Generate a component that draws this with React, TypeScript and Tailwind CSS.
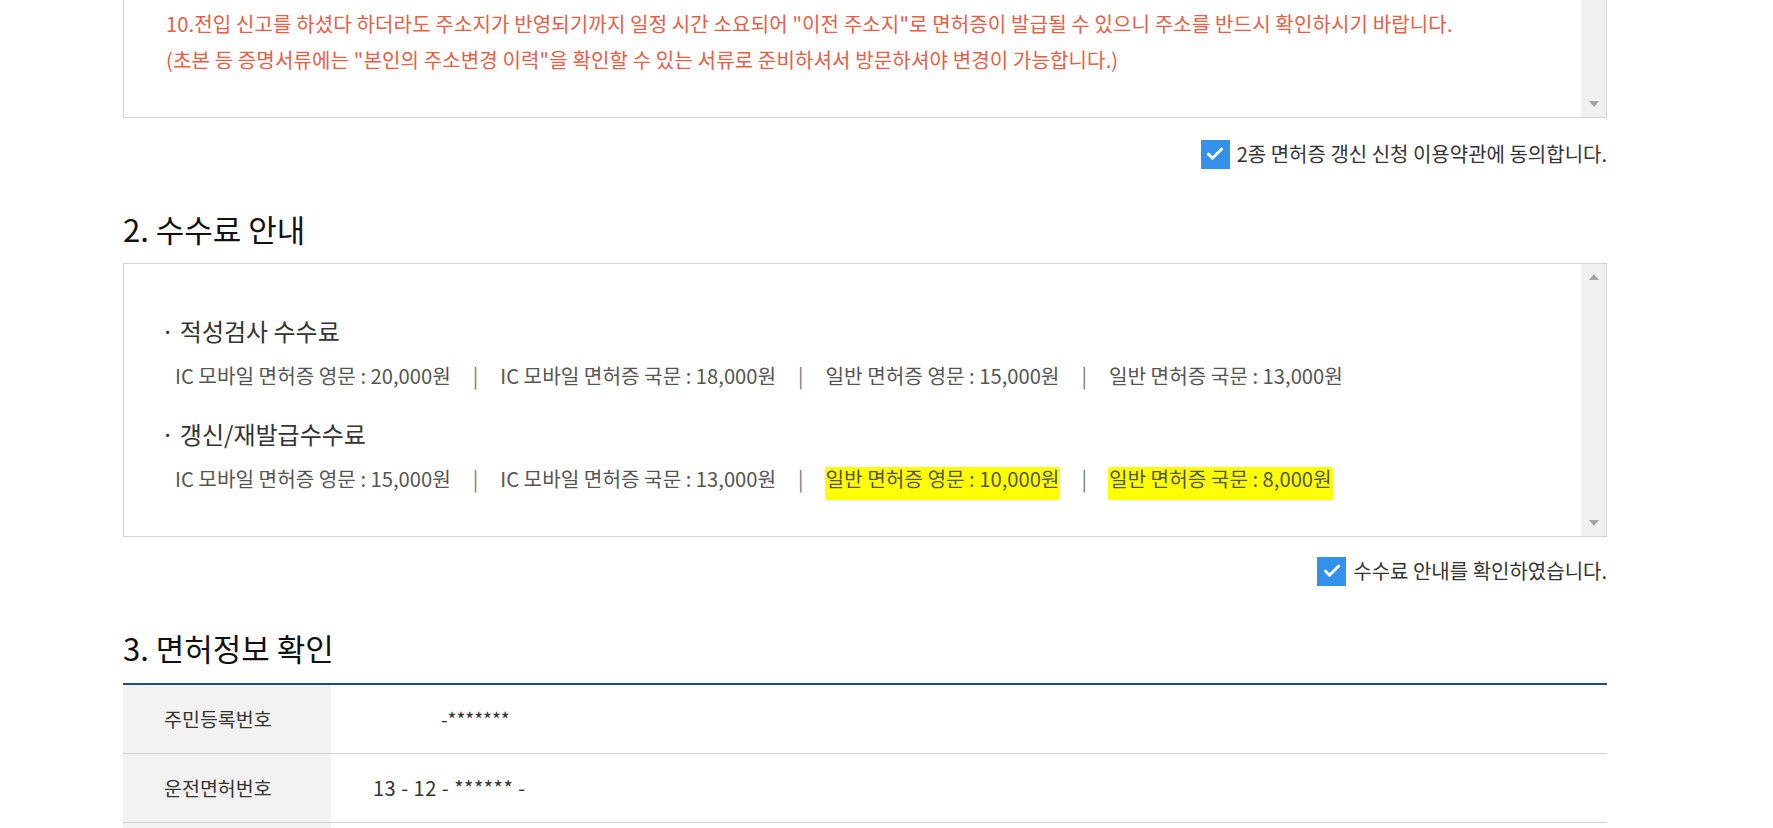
import { Check } from "lucide-react";

const font = { fontFamily: '"Noto Sans CJK KR", "Noto Sans", sans-serif' };

function Scrollbar({ top = true }: { top?: boolean }) {
  return (
    <div className="flex w-[25px] shrink-0 flex-col justify-between bg-[#f0f0f0] py-[10px]">
      <div className="flex justify-center">
        {top && (
          <div className="h-0 w-0 border-x-[5px] border-b-[6px] border-x-transparent border-b-[#a3a3a3]" />
        )}
      </div>
      <div className="flex justify-center">
        <div className="h-0 w-0 border-x-[5px] border-t-[6px] border-x-transparent border-t-[#a3a3a3]" />
      </div>
    </div>
  );
}

function Agree({ label }: { label: string }) {
  return (
    <div className="flex h-[28px] items-center justify-end gap-[7px]">
      <span className="flex h-[29px] w-[29px] items-center justify-center bg-[#3391ea]">
        <Check className="h-[20px] w-[20px] text-white" strokeWidth={3.5} />
      </span>
      <span className="text-[20px] text-[#333]">{label}</span>
    </div>
  );
}

function FeeRow({ items, marked = [] }: { items: string[]; marked?: number[] }) {
  return (
    <div className="mt-[5px] flex items-center gap-[22px] pl-[11px] text-[20.2px] leading-[40px] text-[#555]">
      {items.map((it, i) => (
        <div key={it} className="flex items-center gap-[22px]">
          {i > 0 && <span className="text-[#777]">|</span>}
          {marked.includes(i) ? (
            <span className="relative">
              <span className="absolute -left-[1px] -right-[1px] top-[8px] -bottom-[1px] rounded-[2px] bg-[#ffff00]" />
              <span className="relative">{it}</span>
            </span>
          ) : (
            <span>{it}</span>
          )}
        </div>
      ))}
    </div>
  );
}

export default function App() {
  return (
    <div className="min-h-[828px] bg-white" style={font}>
      <div className="ml-[123px] w-[1484px] pb-10">
        {/* 1. 이용약관 (tail) */}
        <div className="flex h-[118px] border-x border-b border-[#d4d4d4]">
          <div className="flex-1 pl-[42px] pt-[6px] text-[20px] leading-[36px] tracking-[0.15px] text-[#e95c45]">
            <p>
              10.전입 신고를 하셨다 하더라도 주소지가 반영되기까지 일정 시간 소요되어 "이전 주소지"로 면허증이 발급될 수
              있으니 주소를 반드시 확인하시기 바랍니다.
            </p>
            <p>(초본 등 증명서류에는 "본인의 주소변경 이력"을 확인할 수 있는 서류로 준비하셔서 방문하셔야 변경이 가능합니다.)</p>
          </div>
          <Scrollbar top={false} />
        </div>

        <div className="mt-[22px]">
          <Agree label="2종 면허증 갱신 신청 이용약관에 동의합니다." />
        </div>

        {/* 2. 수수료 안내 */}
        <h2 className="mt-[41px] text-[31px] leading-[40px] text-[#111]">2. 수수료 안내</h2>
        <div className="mt-[14px] flex h-[274px] border border-[#d4d4d4]">
          <div className="flex-1 pl-[40px] pt-[47px]">
            <p className="-ml-[3px] text-[24px] leading-[40px] text-[#333]">· 적성검사 수수료</p>
            <FeeRow
              items={[
                "IC 모바일 면허증 영문 : 20,000원",
                "IC 모바일 면허증 국문 : 18,000원",
                "일반 면허증 영문 : 15,000원",
                "일반 면허증 국문 : 13,000원",
              ]}
            />
            <p className="-ml-[3px] mt-[18px] text-[24px] leading-[40px] text-[#333]">· 갱신/재발급수수료</p>
            <FeeRow
              items={[
                "IC 모바일 면허증 영문 : 15,000원",
                "IC 모바일 면허증 국문 : 13,000원",
                "일반 면허증 영문 : 10,000원",
                "일반 면허증 국문 : 8,000원",
              ]}
              marked={[2, 3]}
            />
          </div>
          <Scrollbar />
        </div>

        <div className="mt-[20px]">
          <Agree label="수수료 안내를 확인하였습니다." />
        </div>

        {/* 3. 면허정보 확인 */}
        <h2 className="mt-[43px] text-[31px] leading-[40px] text-[#111]">3. 면허정보 확인</h2>
        <div className="mt-[15px] border-t-2 border-[#1f4a87] text-[19.5px] text-[#333]">
          <div className="flex h-[69px] border-b border-[#cfcfcf]">
            <div className="flex w-[208px] items-center bg-[#f2f2f2] pl-[41px]">주민등록번호</div>
            <div className="flex items-center pl-[110px] text-[19px]">-*******</div>
          </div>
          <div className="flex h-[69px] border-b border-[#cfcfcf]">
            <div className="flex w-[208px] items-center bg-[#f2f2f2] pl-[41px]">운전면허번호</div>
            <div className="flex items-center pl-[42px] text-[20px] tracking-[0.5px]">13 - 12 - ****** -</div>
          </div>
          <div className="flex h-[69px] border-b border-[#cfcfcf]">
            <div className="flex w-[208px] items-center bg-[#f2f2f2] pl-[41px]" />
            <div className="flex items-center pl-[42px]" />
          </div>
        </div>
      </div>
    </div>
  );
}
